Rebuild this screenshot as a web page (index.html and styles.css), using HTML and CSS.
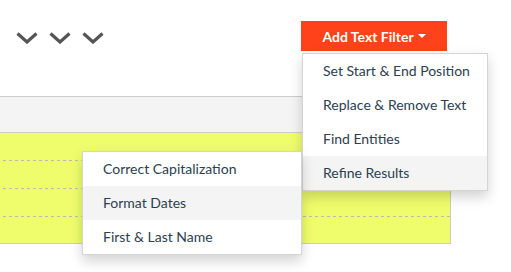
FILE: index.html
```html
<!DOCTYPE html>
<html>
<head>
<meta charset="utf-8">
<link rel="stylesheet" href="styles.css">
</head>
<body>
<div class="page">
  <header class="toolbar">
    <div class="chevrons">
      <svg class="chev" width="22" height="12" viewBox="0 0 22 12"><polyline points="1.5,1.5 11,10 20.5,1.5" fill="none" stroke="#555" stroke-width="3.2"/></svg>
      <svg class="chev" width="22" height="12" viewBox="0 0 22 12"><polyline points="1.5,1.5 11,10 20.5,1.5" fill="none" stroke="#555" stroke-width="3.2"/></svg>
      <svg class="chev" width="22" height="12" viewBox="0 0 22 12"><polyline points="1.5,1.5 11,10 20.5,1.5" fill="none" stroke="#555" stroke-width="3.2"/></svg>
    </div>
    <div class="filter">
      <button class="filter-btn">Add Text Filter<span class="caret"></span></button>
      <ul class="menu menu-main">
        <li>Set Start &amp; End Position</li>
        <li>Replace &amp; Remove Text</li>
        <li>Find Entities</li>
        <li class="active">Refine Results</li>
      </ul>
    </div>
  </header>
  <section class="grid">
    <div class="grid-head"></div>
    <div class="grid-body">
      <div class="row"></div>
      <div class="row"></div>
      <div class="row"></div>
      <div class="row last"></div>
    </div>
    <ul class="menu menu-sub">
      <li>Correct Capitalization</li>
      <li class="active">Format Dates</li>
      <li>First &amp; Last Name</li>
    </ul>
  </section>
</div>
</body>
</html>
```
FILE: styles.css
```css
* { box-sizing: border-box; }
html, body { margin: 0; padding: 0; background: #fff; }
body {
  font-family: Lato, "Open Sans", sans-serif;
  font-size: 14px;
  color: #2c3e50;
  width: 511px;
  height: 272px;
  overflow: hidden;
}
.toolbar {
  height: 96px;
  display: flex;
  align-items: flex-start;
  padding: 21px 64px 0 16px;
}
.chevrons {
  display: flex;
  gap: 11px;
  margin-top: 11px;
}
.chev { display: block; }
.filter {
  position: relative;
  margin-left: auto;
}
.filter-btn {
  display: flex;
  align-items: center;
  justify-content: center;
  width: 146px;
  height: 30px;
  border: 0;
  padding: 0;
  background: #fe4219;
  color: #fff;
  font-family: Lato, sans-serif;
  font-weight: 700;
  font-size: 14px;
}
.caret {
  display: inline-block;
  width: 0;
  height: 0;
  margin-left: 4px;
  border-left: 4px solid transparent;
  border-right: 4px solid transparent;
  border-top: 4px solid #fff;
}
.menu {
  list-style: none;
  margin: 0;
  padding: 0;
  position: absolute;
  background: #fff;
  border: 1px solid rgba(0,0,0,0.17);
  box-shadow: 0 6px 12px rgba(0,0,0,0.175);
  z-index: 2;
}
.menu li {
  height: 34px;
  line-height: 34px;
  padding-left: 20px;
  white-space: nowrap;
}
.menu li.active { background: #f4f4f4; }
.menu-main {
  top: 32px;
  left: 1px;
  width: 186px;
}
.grid {
  position: relative;
  width: 451px;
}
.grid-head {
  height: 37px;
  background: #f4f4f4;
  border-top: 1px solid #ccc;
  border-bottom: 1px solid #ccc;
}
.grid-body {
  background: #effd6c;
  border-right: 1px solid #ccc;
  border-bottom: 1px solid #ccc;
}
.row {
  height: 28px;
  background-image: linear-gradient(to right, transparent 50%, #bcbcaa 50%);
  background-size: 6px 1px;
  background-repeat: repeat-x;
  background-position: 0 100%;
}
.row.last {
  height: 26px;
  background-image: none;
}
.menu-sub {
  top: 55px;
  left: 82px;
  width: 220px;
}
```
